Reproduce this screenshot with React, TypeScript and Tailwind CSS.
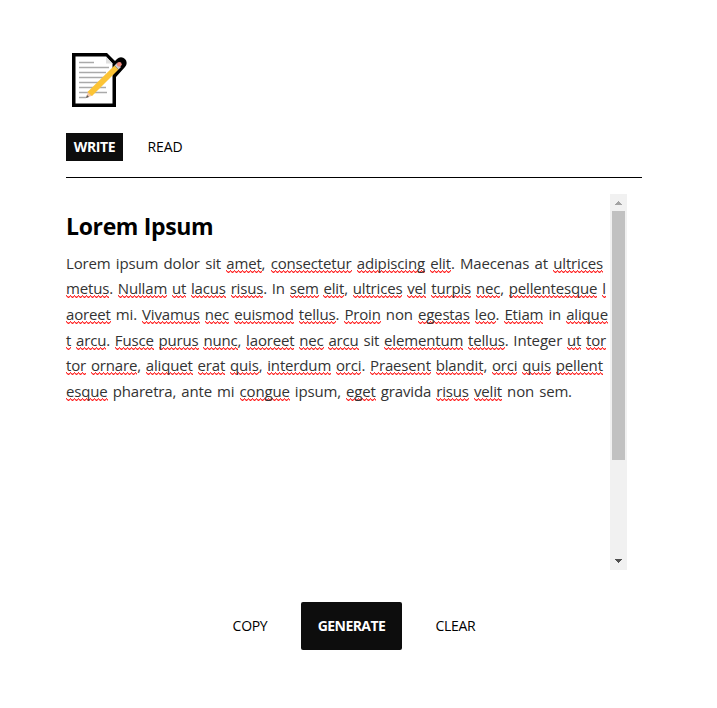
const lines: [number, string][] = [
  [537, 'Lorem ipsum dolor sit *amet~, *consectetur *adipiscing *elit~. Maecenas at *ultrices'],
  [540, '*metus~. *Nullam *ut *lacus *risus~. In *sem *elit~, *ultrices *vel *turpis *nec~, *pellentesque *l'],
  [542, '*aoreet mi. *Vivamus *nec *euismod *tellus~. *Proin non *egestas *leo~. *Etiam in *alique'],
  [540, '*t *arcu~. *Fusce *purus *nunc~, *laoreet *nec *arcu sit *elementum *tellus~. Integer *ut *tor'],
  [537, '*tor *ornare~, *aliquet *erat *quis~, *interdum *orci~. *Praesent *blandit~, *orci *quis *pellent'],
  [506, '*esque pharetra, ante mi *congue ipsum, *eget gravida *risus *velit non sem.'],
];

const squiggle =
  'bg-[image:linear-gradient(90deg,#f33_1px,transparent_1px),linear-gradient(90deg,#f99_1px,#f33_1px,#f33_2px,#f99_2px,#f99_3px,#f33_3px),linear-gradient(90deg,transparent_1px,#f99_1px,#f99_2px,#f22_2px,#f22_3px,#f99_3px)] bg-[length:4px_1px] bg-repeat-x bg-[position:0_17px,0_18px,0_19px]';

function Word({ text }: { text: string }) {
  const marked = text.startsWith('*');
  const [body, tail] = text.replace('*', '').split('~');
  return (
    <span>
      <span className={marked ? 'inline-block h-5 leading-5 ' + squiggle : 'inline-block h-5 leading-5'}>{body}</span>
      {tail}
    </span>
  );
}

function Line({ width, text }: { width: number; text: string }) {
  return (
    <div className="flex h-[25.6px] items-center justify-between whitespace-nowrap leading-5" style={{ width }}>
      {text.split(' ').map((w, i) => (
        <Word key={i} text={w} />
      ))}
    </div>
  );
}

function Memo() {
  return (
    <svg className="ml-0.5 block h-[60px] w-[60px]" viewBox="0 0 60 60">
      <path d="M4 3h35l8 8 2-2a5.500 5.500 0 0 1 8 8l-9 10v30H4z" fill="#000" />
      <path d="M7.500 6.500h30.500l6.500 7v40h-37z" fill="#fff" />
      <path d="M38 6.500v7h6.500z" fill="#e0e0e0" />
      <path d="M11 12.500h15M11 17.500h30M11 22.500h27M11 27.500h27M11 32.500h23M11 37.500h27M11 42.500h28M11 47.500h7" stroke="#aaa" strokeWidth="1.300" />
      <path d="M18 48l2-6.500 4.500 4z" fill="#f3c6a5" />
      <path d="M18 48l1-3 2 2z" fill="#555" />
      <path d="M19.500 42L46.500 15.500l4 4L24 46z" fill="#fcc436" />
      <path d="M46.500 15.500l2.500-2.500 4 4-2.500 2.500z" fill="#ccc" />
      <circle cx="51.300" cy="14.300" r="2.400" fill="#f28b7d" />
    </svg>
  );
}

export default function App() {
  return (
    <main className="h-[708px] w-[717px] overflow-hidden bg-white pl-[66px] pt-[50px] font-['Open_Sans','Noto_Sans',sans-serif] text-black">
      <Memo />
      <nav className="mt-[23px] flex h-7 w-[576px] text-[14px] leading-7">
        <button className="w-[57px] bg-[#0d0d0d] text-center font-bold text-white">
          <span className="inline-block tracking-[-0.4px]">WRITE</span>
        </button>
        <button className="ml-4 w-[52px] text-center font-medium tracking-[-0.1px]">READ</button>
      </nav>
      <div className="mt-4 h-px w-[576px] bg-black" />
      <section className="mt-4 flex h-[376px] w-[561px]">
        <div className="w-[544px] shrink-0">
          <h1 className="mt-4 h-8 text-[23px] font-bold leading-8 tracking-[-0.35px]">Lorem Ipsum</h1>
          <div className="mt-[8px] text-[15px] font-normal tracking-[-0.16px] text-[#333]">
            {lines.map(([width, text]) => (
              <Line key={text} width={width} text={text} />
            ))}
          </div>
        </div>
        <div className="flex w-[17px] flex-col items-center bg-[#f1f1f1]">
          <svg className="h-[17px] w-[17px] shrink-0" viewBox="0 0 17 17" shapeRendering="crispEdges">
            <path d="M5 11h7v-1h-1v-1h-1v-1h-1v-1h-1v1h-1v1h-1v1h-1z" fill="#a3a3a3" />
          </svg>
          <div className="h-[249px] w-[13px] bg-[#c1c1c1]" />
          <svg className="mt-auto h-[17px] w-[17px] shrink-0" viewBox="0 0 17 17" shapeRendering="crispEdges">
            <path d="M5 6h7v1h-1v1h-1v1h-1v1h-1v-1h-1v-1h-1v-1h-1z" fill="#505050" />
          </svg>
        </div>
      </section>
      <footer className="mt-8 flex h-12 w-[576px] pl-[150px] text-[14px] font-medium leading-[48px]">
        <button className="w-[68px] text-center tracking-[-0.3px]">COPY</button>
        <button className="ml-[17px] w-[101px] rounded-[2px] bg-[#0d0d0d] text-center font-bold tracking-[-0.55px] text-white">GENERATE</button>
        <button className="ml-[17px] w-[73px] text-center tracking-[-0.3px]">CLEAR</button>
      </footer>
    </main>
  );
}
